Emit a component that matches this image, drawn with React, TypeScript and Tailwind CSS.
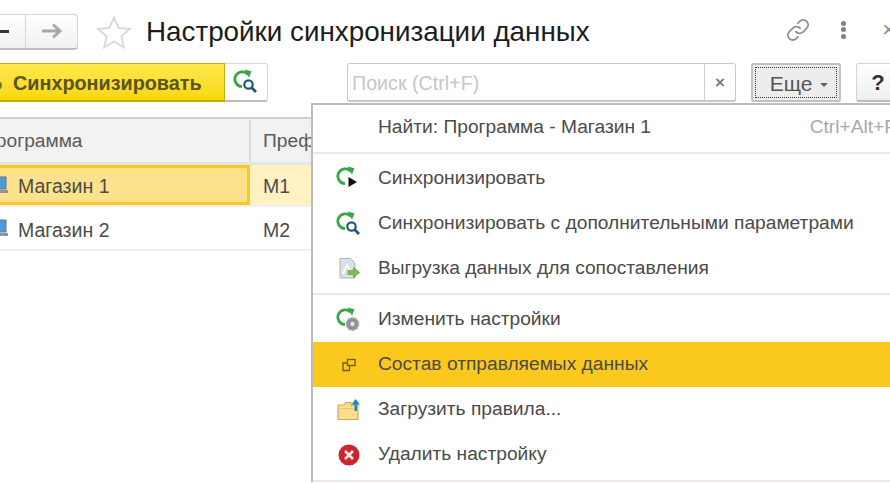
import type { ReactNode } from "react";

const Sync = () => (
  <>
    <path d="M15 5.500A7.400 7.400 0 1 0 9 17.600" fill="none" stroke="#3aa648" strokeWidth="2.800" />
    <path d="M11.500 0.500l7 1.800-2.500 6.500z" fill="#3aa648" />
  </>
);

const SyncPlay = () => (
  <svg width="26" height="26" viewBox="0 0 26 26">
    <Sync />
    <path d="M12.500 11l8.500 5-8.500 5z" fill="#111" />
  </svg>
);

const SyncSearch = ({ size = 26 }: { size?: number }) => (
  <svg width={size} height={size} viewBox="0 0 26 26">
    <Sync />
    <circle cx="15.500" cy="15.500" r="4.200" fill="#fff" stroke="#24587a" strokeWidth="2.200" />
    <path d="M18.500 18.500l4.500 4.500" stroke="#24587a" strokeWidth="2.800" />
  </svg>
);

const SyncGear = () => (
  <svg width="26" height="26" viewBox="0 0 26 26">
    <Sync />
    <circle cx="16.500" cy="17" r="6.400" fill="#8d9296" />
    <circle cx="16.500" cy="17" r="6.400" fill="none" stroke="#b8bcbf" strokeWidth="1.600" strokeDasharray="2 2" />
    <circle cx="16.500" cy="17" r="2.200" fill="#e4e6e7" />
  </svg>
);

const DataExport = () => (
  <svg width="24" height="24" viewBox="0 0 24 24">
    <path d="M3 1.500h10.500L18 6v15H3z" fill="#d9e0e6" stroke="#aab4bd" />
    <path d="M6 17l4-9 3 5" fill="none" stroke="#fff" strokeWidth="1.800" />
    <path d="M11 13.500h5.500V10.500l6 5-6 5V17.500H11z" fill="#7cc24e" stroke="#5a9e38" strokeWidth="0.700" />
  </svg>
);

const Copies = () => (
  <svg width="16" height="16" viewBox="0 0 16 16" fill="none" stroke="#6b5a1c" strokeWidth="1.300">
    <rect x="6.500" y="2.500" width="7.500" height="6" />
    <path d="M6.500 6H2v7.500h6.500V8.500" />
  </svg>
);

const FolderUp = () => (
  <svg width="24" height="24" viewBox="0 0 24 24">
    <path d="M1 7h6l2-2.500h5V7h7v14.500H1z" fill="#f9df8c" stroke="#d1a958" strokeWidth="1.200" />
    <path d="M1 10.500h20" stroke="#e9c56d" />
    <path d="M17.500 13V6.500h-3L18.500 1l4.500 5.500h-3V13z" fill="#1f86c8" />
  </svg>
);

const RemoveIcon = () => (
  <svg width="22" height="22" viewBox="0 0 22 22">
    <circle cx="11" cy="11" r="10.500" fill="#cd2530" />
    <path d="M7 7l8 8M15 7l-8 8" stroke="#fbe6e6" strokeWidth="2.600" />
  </svg>
);

const Laptop = () => (
  <svg width="20" height="20" viewBox="0 0 20 20">
    <rect x="3" y="2" width="14" height="12" fill="#4f9bd8" stroke="#6b7680" />
    <path d="M1 15h18v3H1z" fill="#8e979e" />
  </svg>
);

const MenuItem = ({ icon, label, hint, active }: { icon?: ReactNode; label: string; hint?: string; active?: boolean }) => (
  <div className={`flex h-[45px] items-center text-[19.200px] text-[#4b4b4b] ${active ? "bg-[#fbc81e]" : ""}`}>
    <span className="flex w-[65px] shrink-0 justify-center pl-[6px]">{icon}</span>
    <span className="whitespace-nowrap">{label}</span>
    {hint && <span className="ml-auto mr-[15px] whitespace-nowrap text-[#a3a9b0]">{hint}</span>}
  </div>
);

const Row = ({ name, pref, selected }: { name: string; pref: string; selected?: boolean }) => (
  <div className={`flex border-b-2 border-[#f0f0f0] text-[19.500px] text-[#4b4b4b] ${selected ? "h-[42px] bg-[#fef2c4]" : "h-[44px]"}`}>
    <div className={`flex w-[250px] items-center gap-[9px] border-[3px] border-l-0 ${selected ? "border-[#fcc820] bg-[#fde28b]" : "border-transparent"}`}>
      <span className="-ml-[11px]"><Laptop /></span>
      <span className={selected ? "pt-[3px]" : "pt-[5px]"}>{name}</span>
    </div>
    <div className={`flex items-center pl-[13px] ${selected ? "pt-[3px]" : "pt-[5px]"}`}>{pref}</div>
  </div>
);

export default function App() {
  return (
    <div className="relative h-[483px] w-[890px] overflow-hidden bg-white font-['Liberation_Sans',Arial,sans-serif]">
      {/* top bar */}
      <div className="flex h-[63px] items-center">
        <div className="-ml-[20px] flex h-[36px] w-[98px] shrink-0 rounded-[4px] border border-[#d4d4d4] border-b-2 border-b-[#bdbdbd] bg-gradient-to-b from-white to-[#f1f1f1]">
          <div className="flex w-[45px] items-center justify-end border-r border-[#d6d6d6] pr-[16px]">
            <span className="h-[3px] w-[9px] bg-[#333]"></span>
          </div>
          <div className="flex flex-1 items-center justify-center">
            <svg width="22" height="18" viewBox="0 0 22 18" fill="none" stroke="#a9a9a9" strokeWidth="3">
              <path d="M1 9h18M12 2.500l7 6.500-7 6.500" />
            </svg>
          </div>
        </div>
        <svg className="ml-[18px] shrink-0" width="36" height="34" viewBox="0 0 36 34" fill="#fff" stroke="#d3d8dc" strokeWidth="1.800">
          <path d="M18 2.500l4.600 10.400 11.200 1.100-8.500 7.400 2.500 11-9.800-5.800-9.800 5.800 2.500-11-8.500-7.400 11.200-1.100z" />
        </svg>
        <h1 className="ml-[14px] whitespace-nowrap text-[27.800px] leading-none text-[#1c1c1c]">Настройки синхронизации данных</h1>
        <div className="-mr-[5px] -mt-[4px] ml-auto flex items-center text-[#8a8a8a]">
          <svg width="26" height="26" viewBox="0 0 24 24" fill="none" stroke="#909090" strokeWidth="1.700" strokeLinecap="round">
            <path d="M10 13.500a4.500 4.500 0 0 0 6.500.5l3.500-3.500a4.500 4.500 0 0 0-6.400-6.400L12 5.700" />
            <path d="M14 10.500a4.500 4.500 0 0 0-6.500-.5L4 13.500a4.500 4.500 0 0 0 6.400 6.400l1.600-1.600" />
          </svg>
          <div className="ml-[30px] flex flex-col gap-[1.500px]">
            <span className="size-[5px] rounded-full bg-[#808080]"></span>
            <span className="size-[5px] rounded-full bg-[#808080]"></span>
            <span className="size-[5px] rounded-full bg-[#808080]"></span>
          </div>
          <span className="ml-[36px] text-[22px] leading-none text-[#8a8a8a]">×</span>
        </div>
      </div>

      {/* toolbar */}
      <div className="flex h-[39px] items-stretch">
        <div className="-ml-[12px] flex w-[237px] shrink-0 items-center rounded-l-[3px] border border-[#c9a90e] border-b-2 bg-gradient-to-b from-[#ffe84a] to-[#f8d800] pl-[8px] pt-[3px] text-[19.800px] font-bold text-[#5a5420]">
          <span className="mr-[11px] mt-[3px] h-[9px] w-[5px] rounded-r-full bg-[#5f7a24]"></span>
          <span>Синхронизировать</span>
        </div>
        <div className="flex w-[43px] shrink-0 items-center justify-center rounded-r-[3px] border border-l-0 border-[#d6d6d6] border-b-2 border-b-[#bdbdbd] bg-white">
          <SyncSearch />
        </div>
        <div className="ml-[79px] flex w-[389px] shrink-0 rounded-[3px] border border-[#c8c8c8] border-b-2">
          <div className="flex flex-1 items-center pl-[4px] pt-[3px] text-[19.700px] text-[#c6c6cc]">Поиск (Ctrl+F)</div>
          <div className="flex w-[31px] items-center justify-center border-l border-[#cfcfcf] text-[17px] font-bold leading-none text-[#7a7a7a]">×</div>
        </div>
        <div className="ml-[15px] w-[90px] shrink-0 rounded-[3px] border-2 border-[#c0c0c0] bg-[#ededed] p-[2px]">
          <div className="flex h-full items-center justify-center gap-[8px] border border-dotted border-[#333] pl-[6px] pt-[2px] text-[21px] text-[#555]">
            Еще
            <span className="mt-[2px] border-x-[4px] border-t-[4px] border-x-transparent border-t-[#666]"></span>
          </div>
        </div>
        <div className="ml-[15px] flex w-[50px] shrink-0 items-center justify-center rounded-[3px] border border-[#d4d4d4] border-b-2 border-b-[#bdbdbd] bg-gradient-to-b from-white to-[#efefef] pr-[6px] text-[22px] font-bold text-[#333]">?</div>
      </div>

      {/* table */}
      <div className="mt-[15px]">
        <div className="flex h-[48px] border-y-2 border-b-[3px] border-t-[#cfcfcf] border-b-[#e6e6e6] bg-[#f2f2f2] pt-[1px] text-[19.200px] text-[#5a5a5a]">
          <div className="flex w-[251px] items-center border-r-2 border-[#dcdcdc]">
            <span className="-ml-[18px]">Программа</span>
          </div>
          <div className="flex items-center pl-[12px]">Префикс</div>
        </div>
        <Row name="Магазин 1" pref="М1" selected />
        <Row name="Магазин 2" pref="М2" />
      </div>

      {/* dropdown menu */}
      <div className="absolute left-[311px] top-[103px] w-[600px] border-l-2 border-t-2 border-[#bdbdbd] bg-white">
        <MenuItem label="Найти: Программа - Магазин 1" hint="Ctrl+Alt+F" />
        <div className="my-[2px] h-[2px] bg-[#ece9dc]"></div>
        <MenuItem icon={<SyncPlay />} label="Синхронизировать" />
        <MenuItem icon={<SyncSearch />} label="Синхронизировать с дополнительными параметрами" />
        <MenuItem icon={<DataExport />} label="Выгрузка данных для сопоставления" />
        <div className="my-[2px] h-[2px] bg-[#ece9dc]"></div>
        <MenuItem icon={<SyncGear />} label="Изменить настройки" />
        <MenuItem icon={<Copies />} label="Состав отправляемых данных" active />
        <MenuItem icon={<FolderUp />} label="Загрузить правила..." />
        <MenuItem icon={<RemoveIcon />} label="Удалить настройку" />
        <div className="mt-[3px] h-[2px] bg-[#ece9dc]"></div>
      </div>
    </div>
  );
}
